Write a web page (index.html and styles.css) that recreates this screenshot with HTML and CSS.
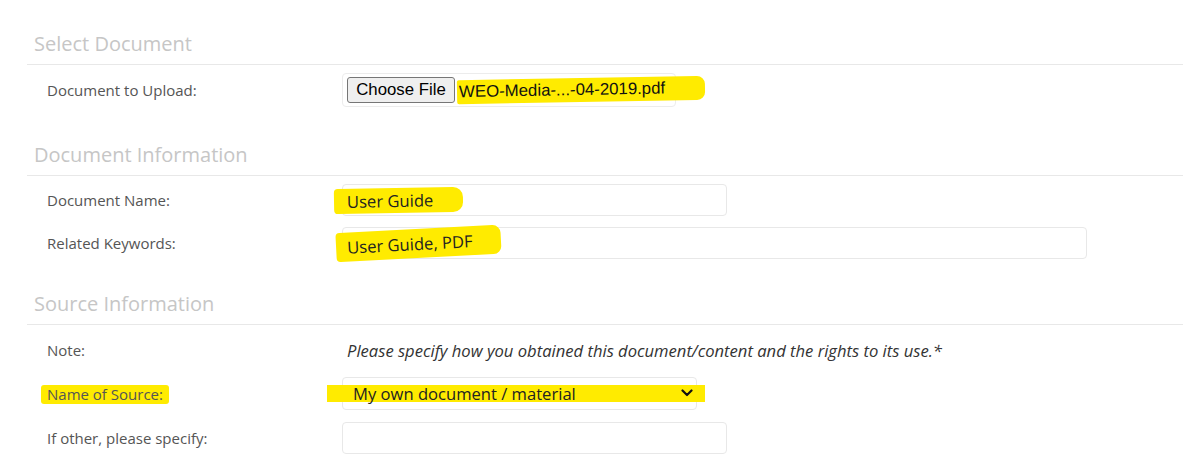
FILE: index.html
```html
<!DOCTYPE html>
<html>
<head>
<meta charset="utf-8">
<link rel="stylesheet" href="styles.css">
</head>
<body>
<div class="page">
  <section class="section s1">
    <h2 class="heading">Select Document</h2>
    <div class="rows">
      <div class="row">
        <div class="label">Document to Upload:</div>
        <div class="field">
          <div class="file-box">
            <span class="file-btn">Choose File</span>
            <span class="mark mark-file">WEO-Media-...-04-2019.pdf</span>
          </div>
        </div>
      </div>
    </div>
  </section>
  <section class="section s2">
    <h2 class="heading">Document Information</h2>
    <div class="rows">
      <div class="row">
        <div class="label">Document Name:</div>
        <div class="field">
          <div class="input w-md"><span class="mark mark-name">User Guide</span></div>
        </div>
      </div>
      <div class="row">
        <div class="label">Related Keywords:</div>
        <div class="field">
          <div class="input w-lg"><span class="mark mark-kw">User Guide, PDF</span></div>
        </div>
      </div>
    </div>
  </section>
  <section class="section s3">
    <h2 class="heading">Source Information</h2>
    <div class="rows">
      <div class="row">
        <div class="label">Note:</div>
        <div class="field"><p class="note">Please specify how you obtained this document/content and the rights to its use.*</p></div>
      </div>
      <div class="row">
        <div class="label"><span class="mark mark-label">Name of Source:</span></div>
        <div class="field">
          <div class="select">
            <span class="mark mark-select">
              <span class="select-text">My own document / material</span>
              <svg class="chev" width="12" height="8" viewBox="0 0 12 8"><path d="M1.5 1.5 L6 6 L10.5 1.5" fill="none" stroke="#111" stroke-width="2.2" stroke-linecap="round" stroke-linejoin="round"/></svg>
            </span>
          </div>
        </div>
      </div>
      <div class="row">
        <div class="label">If other, please specify:</div>
        <div class="field"><div class="input w-md"></div></div>
      </div>
    </div>
  </section>
</div>
</body>
</html>
```

FILE: styles.css
```css
* { box-sizing: border-box; }
html, body { margin: 0; padding: 0; background: #fff; }
body { font-family: "Open Sans", "Noto Sans", sans-serif; color: #555; }

.page { padding: 31px 0 0 27px; }

.section { margin: 0; }
.s1 { padding-bottom: 35px; }
.s2 { padding-bottom: 32px; }

.heading {
  margin: 0;
  font-weight: 400;
  font-size: 20px;
  line-height: 26px;
  color: #c6c6c6;
  padding: 0 0 7px 7px;
  border-bottom: 1px solid #e8e8e8;
}

.rows {
  display: flex;
  flex-direction: column;
  padding: 8px 0 0 20px;
  gap: 12px;
}
.s2 .rows { padding-top: 8px; gap: 11px; }
.s3 .rows { padding-top: 9px; gap: 12px; }

.row {
  display: grid;
  grid-template-columns: 295px 1fr;
  align-items: center;
  min-height: 32px;
}

.label { font-size: 15px; color: #555; }

.file-box {
  width: 334px;
  height: 34px;
  border: 1px solid #ececec;
  border-radius: 4px;
  display: flex;
  align-items: center;
  padding-left: 4px;
  gap: 4px;
  font-family: "Liberation Sans", Arial, sans-serif;
  font-size: 16.8px;
  color: #111;
  white-space: nowrap;
}
.file-btn {
  display: inline-flex;
  align-items: center;
  justify-content: center;
  flex: none;
  width: 108px;
  height: 26px;
  background: #efefef;
  border: 1px solid #767676;
  border-radius: 3px;
  color: #000;
}

.input {
  height: 32px;
  border: 1px solid #e8e8e8;
  border-radius: 4px;
  display: flex;
  align-items: center;
  padding-left: 4px;
  font-size: 16.6px;
  color: #222;
}
.w-md { width: 385px; }
.w-lg { width: 745px; }

.note {
  margin: 0;
  padding-left: 5px;
  font-style: italic;
  font-size: 16.6px;
  color: #333;
}

.select {
  width: 355px;
  height: 33px;
  border: 1px solid #e8e8e8;
  border-radius: 4px;
  display: flex;
  align-items: center;
  font-size: 16.6px;
  color: #222;
  margin-top: -2px;
}

.mark { background: #ffeb00; }
.mark-file {
  display: inline-block;
  flex: none;
  line-height: 22px;
  padding: 1px 40px 1px 2px;
  margin-left: -2px;
  border-radius: 2px 8px 8px 2px;
  transform: rotate(-1deg);
}
.mark-name {
  padding: 1px 30px 1px 13px;
  margin-left: -13px;
  border-radius: 4px 10px 10px 4px;
  transform: rotate(-1deg);
  display: inline-block;
}
.mark-kw {
  padding: 3px 28px 3px 11px;
  margin-left: -11px;
  border-radius: 4px 8px 8px 4px;
  transform: rotate(-3deg);
  display: inline-block;
}
.mark-label {
  display: inline-block;
  padding: 0 6px;
  margin-left: -6px;
  border-radius: 3px;
  line-height: 19px;
}
.mark-select {
  display: flex;
  align-items: center;
  flex: none;
  width: 378px;
  margin-left: -16px;
  padding-left: 26px;
  padding-right: 12px;
  height: 17px;
}
.select-text { flex: 1; }
.chev { display: block; }
```
